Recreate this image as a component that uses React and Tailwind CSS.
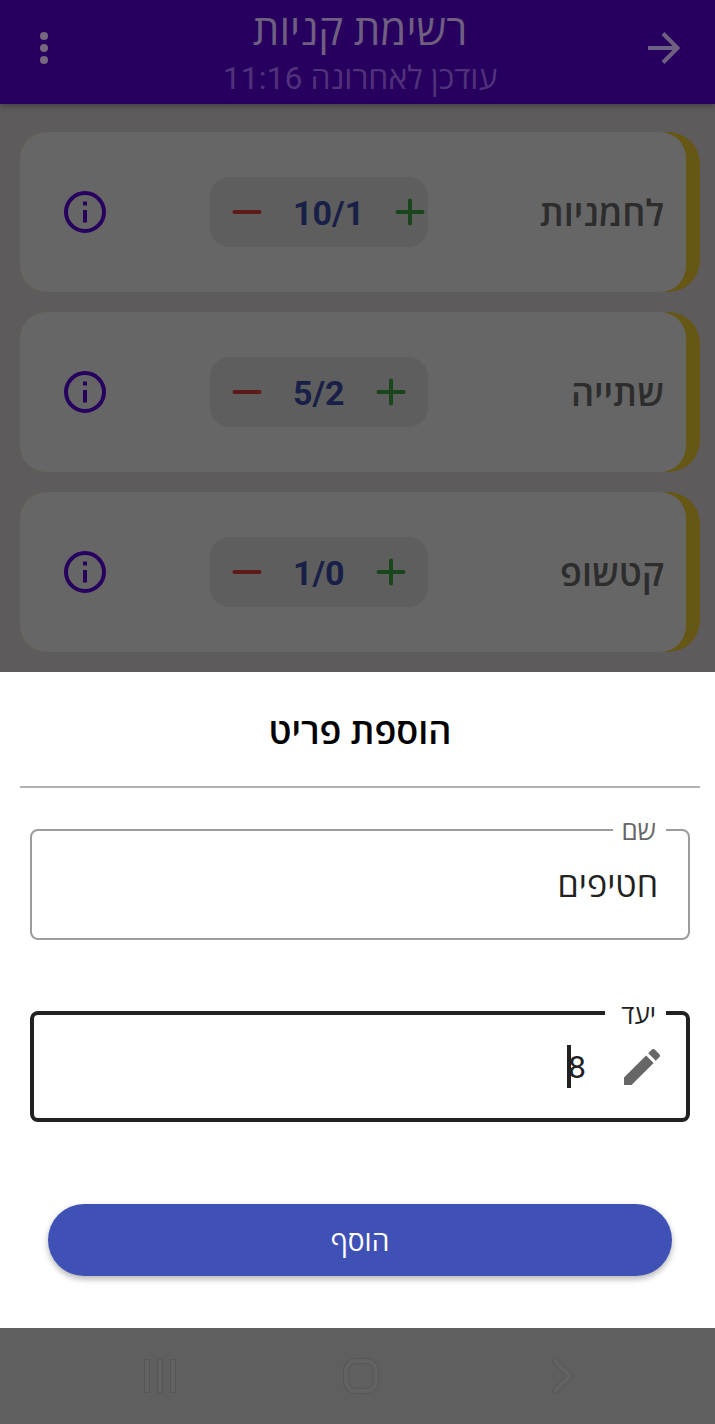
import { useState } from "react";

const items = [
  { name: "לחמניות", count: "10/1" },
  { name: "שתייה", count: "5/2" },
  { name: "קטשופ", count: "1/0" },
];

function Header() {
  return (
    <header className="relative z-10 flex h-26 items-start bg-[#27005f] pr-[27px] pl-5 shadow-[0_2px_6px_rgba(0,0,0,0.3)]">
      <button type="button" aria-label="חזרה" className="mt-6 flex size-12 items-center justify-center text-[#6f5f80]">
        <svg viewBox="0 0 48 48" className="size-12" fill="none" stroke="currentColor" strokeWidth="4" aria-hidden="true">
          <path d="M8 24H37M23 9.5L37.5 24L23 38.5" />
        </svg>
      </button>
      <div className="flex flex-1 flex-col items-center pt-2">
        <h1 className="text-[42px] leading-[46px] text-[#6f5f80]">רשימת קניות</h1>
        <p className="text-[32px] leading-12 text-[#51327a]">עודכן לאחרונה 11:16</p>
      </div>
      <button type="button" aria-label="תפריט" className="mt-6 mr-3 flex size-12 items-center justify-center text-[#75687f]">
        <svg viewBox="0 0 48 48" className="size-12" fill="currentColor" aria-hidden="true">
          <circle cx="24" cy="12" r="4" />
          <circle cx="24" cy="24" r="4" />
          <circle cx="24" cy="36" r="4" />
        </svg>
      </button>
    </header>
  );
}

function ItemCard({ name, count }) {
  return (
    <li className="rounded-l-[26px] rounded-r-[32px] bg-[#665714] pr-[14px]">
      <div className="flex h-40 items-center rounded-[26px] bg-[#666666] pr-[22px] pl-11">
        <h2 className="flex-1 pt-1 text-[36px] leading-12 font-semibold text-[#2d2d2d]">{name}</h2>
        <div dir="ltr" className="flex h-[70px] w-[218px] shrink-0 items-center justify-start gap-[31px] rounded-[20px] bg-[#5e5e5e] pl-[22px]">
          <button type="button" aria-label="הפחתה" className="shrink-0 text-[#5c1a18]">
            <svg viewBox="0 0 30 30" className="size-[30px]" fill="none" stroke="currentColor" strokeWidth="4" strokeLinecap="round" aria-hidden="true">
              <path d="M2.5 15H27.5" />
            </svg>
          </button>
          <span className="pt-0.5 text-[34px] leading-10 font-bold text-[#192048]">{count}</span>
          <button type="button" aria-label="הוספה" className="shrink-0 text-[#1a461d]">
            <svg viewBox="0 0 30 30" className="size-[30px]" fill="none" stroke="currentColor" strokeWidth="4" strokeLinecap="round" aria-hidden="true">
              <path d="M2.5 15H27.5M15 3.5V26.5" />
            </svg>
          </button>
        </div>
        <button type="button" aria-label="מידע" className="mr-[104px] shrink-0 text-[#27005f]">
          <svg viewBox="0 0 42 42" className="size-[42px]" aria-hidden="true">
            <circle cx="21" cy="21" r="19" fill="none" stroke="currentColor" strokeWidth="4" />
            <path d="M19 10.500h4v4h-4zM19 19h4v12.500h-4z" fill="currentColor" />
          </svg>
        </button>
      </div>
    </li>
  );
}

function AddSheet() {
  const [name, setName] = useState("חטיפים");
  const [goal, setGoal] = useState("8");
  return (
    <section className="bg-white pr-[15px] pl-5">
      <h2 className="border-b-2 border-[#b2b2b2] pt-9 pb-[30px] text-center text-[36px] leading-12 font-semibold text-black">
        הוספת פריט
      </h2>
      <form className="px-[10px] pt-[41px] pb-[52px]" onSubmit={(e) => e.preventDefault()}>
        <div className="relative flex h-[111px] items-center rounded-lg border-2 border-[#9c9c9c] px-[30px]">
          <label htmlFor="item-name" className="absolute top-0 right-[22px] -translate-y-1/2 bg-white pr-[10px] pl-2 text-[26px] leading-8 text-[#666666]">
            שם
          </label>
          <input
            id="item-name"
            value={name}
            onChange={(e) => setName(e.target.value)}
            className="w-full bg-transparent text-[34px] leading-12 text-[#212121] outline-none"
          />
        </div>
        <div className="relative mt-[71px] flex h-[111px] items-center gap-8 rounded-lg border-4 border-[#212121] px-5">
          <label htmlFor="item-goal" className="absolute top-0 right-5 -translate-y-1/2 bg-white pr-[10px] pl-4 text-[26px] leading-8 text-[#212121]">
            יעד
          </label>
          <svg viewBox="0 0 24 24" className="size-12 shrink-0" fill="#666666" aria-hidden="true">
            <path d="M3 17.250V21h3.750L17.810 9.940l-3.750-3.750L3 17.250zM20.710 7.040c.39-.39.39-1.020 0-1.410l-2.340-2.340c-.39-.39-1.020-.39-1.410 0l-1.830 1.830 3.750 3.750 1.830-1.830z" />
          </svg>
          <div className="relative flex-1">
            <input
              id="item-goal"
              inputMode="numeric"
              value={goal}
              onChange={(e) => setGoal(e.target.value)}
              className="w-full bg-transparent text-[32px] leading-12 text-[#212121] caret-transparent outline-none"
            />
            <span className="absolute top-[2px] right-[15px] h-[43px] w-1 bg-[#212121]" aria-hidden="true" />
          </div>
        </div>
        <div className="mt-[82px] px-[18px]">
          <button type="submit" className="h-18 w-full rounded-full bg-[#3f51b5] pt-1 text-[28px] leading-10 text-white shadow-[0_3px_6px_rgba(0,0,0,0.3)]">
            הוסף
          </button>
        </div>
      </form>
    </section>
  );
}

function SystemBar() {
  return (
    <nav dir="ltr" className="flex h-24 items-center justify-around bg-[#5f5f5f] pr-[53px] pl-[59px] text-[#626262]">
      <button type="button" aria-label="אחרונים">
        <svg viewBox="0 0 40 40" className="size-10" fill="currentColor" stroke="#555555" strokeWidth="1" aria-hidden="true">
          <rect x="4.500" y="3.500" width="5" height="33" rx="1" />
          <rect x="17.500" y="3.500" width="5" height="33" rx="1" />
          <rect x="30.500" y="3.500" width="5" height="33" rx="1" />
        </svg>
      </button>
      <button type="button" aria-label="בית">
        <svg viewBox="0 0 40 40" className="size-10" fill="none" aria-hidden="true">
          <rect x="5" y="5" width="30" height="30" rx="10" stroke="#575757" strokeWidth="6" />
          <rect x="5" y="5" width="30" height="30" rx="10" stroke="currentColor" strokeWidth="4" />
        </svg>
      </button>
      <button type="button" aria-label="הקודם">
        <svg viewBox="0 0 40 40" className="size-10" fill="none" strokeLinecap="round" aria-hidden="true">
          <path d="M13 5.500L28 20L13 34.500" stroke="#575757" strokeWidth="6" />
          <path d="M13 5.500L28 20L13 34.500" stroke="currentColor" strokeWidth="4.500" />
        </svg>
      </button>
    </nav>
  );
}

export default function App() {
  return (
    <div dir="rtl" className="min-h-screen bg-[#5e5b5c] font-['Roboto','Open_Sans',sans-serif]">
      <Header />
      <main>
        <ul className="flex flex-col gap-5 pt-7 pr-[15px] pb-5 pl-5">
          {items.map((item) => (
            <ItemCard key={item.name} {...item} />
          ))}
        </ul>
        <AddSheet />
      </main>
      <SystemBar />
    </div>
  );
}
